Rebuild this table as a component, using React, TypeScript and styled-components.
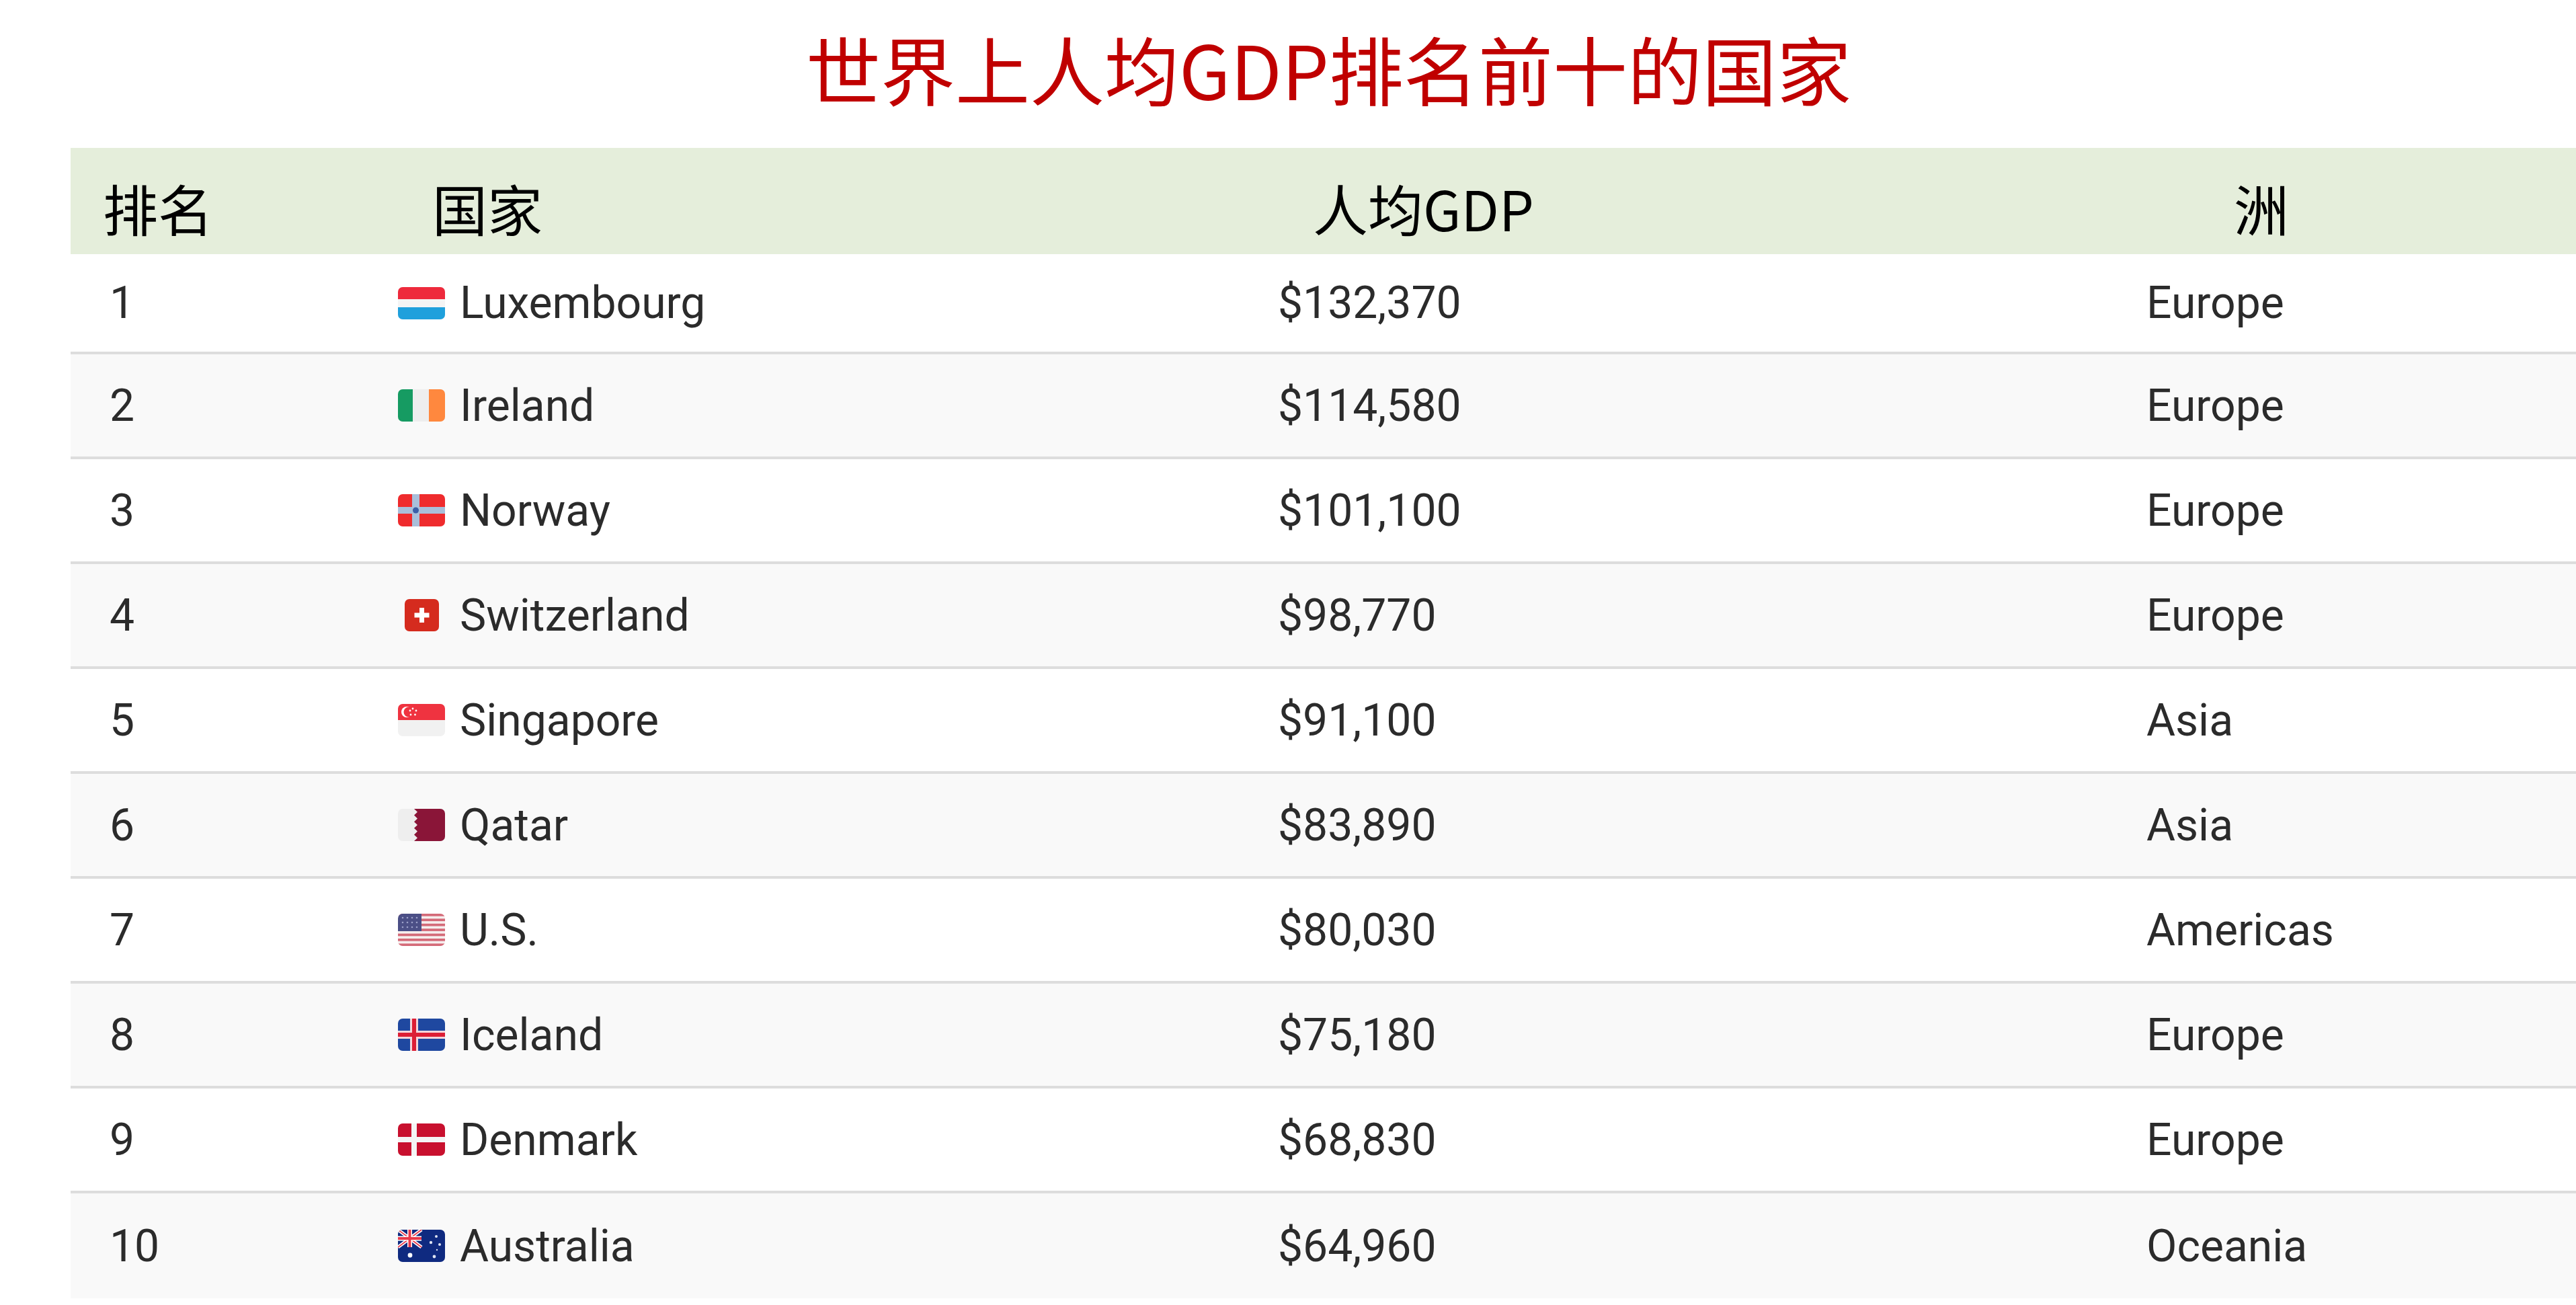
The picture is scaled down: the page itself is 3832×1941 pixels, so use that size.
import React from 'react';
import styled, { createGlobalStyle } from 'styled-components';

const GlobalStyle = createGlobalStyle`
  * {
    box-sizing: border-box;
  }
  body {
    margin: 0;
    background: #ffffff;
  }
`;

const Page = styled.div`
  padding-top: 45px;
`;

const Title = styled.h1`
  margin: 0 0 0 105px;
  padding: 0 0 64px 16px;
  text-align: center;
  font-family: "Noto Sans CJK SC", sans-serif;
  font-weight: 400;
  font-size: 111px;
  line-height: 1;
  color: #c00000;
`;

const Table = styled.div`
  margin-left: 105px;
`;

const HeaderRow = styled.div`
  display: grid;
  grid-template-columns: 490px 1310px 1370px 1fr;
  padding: 48px 0 28px 48px;
  background: #e5eedb;
  font-family: "Noto Sans CJK SC", sans-serif;
  font-size: 82px;
  line-height: 1;
  color: #000000;
`;

const HeaderCell = styled.div`
  white-space: nowrap;
`;

const Body = styled.div``;

const Row = styled.div<{ $alt: boolean }>`
  display: grid;
  grid-template-columns: 429px 1309px 1292px 1fr;
  align-items: center;
  height: 156px;
  padding-left: 58px;
  background: ${(p) => (p.$alt ? '#f9f9f9' : '#ffffff')};
  border-bottom: 4px solid #dddddd;
  font-family: Roboto, "Liberation Sans", sans-serif;
  font-size: 66px;
  color: #2b2b2b;

  &:first-child {
    height: 149px;
  }
  &:last-child {
    border-bottom: none;
  }
`;

const Cell = styled.div`
  white-space: nowrap;
`;

const CountryCell = styled.div`
  display: flex;
  align-items: center;
  gap: 22px;
  white-space: nowrap;
`;

const FlagSlot = styled.span`
  width: 70px;
  display: flex;
  justify-content: center;
`;

const FlagFrame = styled.svg`
  display: block;
  border-radius: 7px;
  overflow: hidden;
`;

const W = 70;
const H = 48;

const Flag = ({ w = W, children }: { w?: number; children: React.ReactNode }) => (
  <FlagSlot>
    <FlagFrame width={w} height={H} viewBox={`0 0 ${w} ${H}`}>
      {children}
    </FlagFrame>
  </FlagSlot>
);

const flags: Record<string, React.ReactNode> = {
  LU: (
    <Flag>
      <rect width={W} height={H} fill="#f4f4f4" />
      <rect width={W} height={18} fill="#ee2a3c" />
      <rect y={30} width={W} height={18} fill="#1fa0dc" />
    </Flag>
  ),
  IE: (
    <Flag>
      <rect width={W} height={H} fill="#eeeeee" />
      <rect width={22} height={H} fill="#169b62" />
      <rect x={46} width={24} height={H} fill="#ff883e" />
    </Flag>
  ),
  NO: (
    <Flag>
      <rect width={W} height={H} fill="#ef2b2d" />
      <rect x={21} width={11} height={H} fill="#a9bfda" />
      <rect y={19} width={W} height={10} fill="#a9bfda" />
      <circle cx={26.5} cy={24} r={4.5} fill="#3b5ea8" />
    </Flag>
  ),
  CH: (
    <Flag w={51}>
      <rect width={51} height={H} fill="#d52b1e" />
      <rect x={22} y={13} width={7} height={22} fill="#ffffff" />
      <rect x={14.5} y={20.5} width={22} height={7} fill="#ffffff" />
    </Flag>
  ),
  SG: (
    <Flag>
      <rect width={W} height={H} fill="#f1f1f1" />
      <rect width={W} height={24} fill="#ef3340" />
      <circle cx={13} cy={12} r={8} fill="#ffffff" />
      <circle cx={16} cy={12} r={7.5} fill="#ef3340" />
      <circle cx={22} cy={7} r={1.4} fill="#ffffff" />
      <circle cx={27} cy={10} r={1.4} fill="#ffffff" />
      <circle cx={25.5} cy={16} r={1.4} fill="#ffffff" />
      <circle cx={19} cy={16} r={1.4} fill="#ffffff" />
      <circle cx={18} cy={10} r={1.4} fill="#ffffff" />
    </Flag>
  ),
  QA: (
    <Flag>
      <rect width={W} height={H} fill="#eeeeee" />
      <polygon
        points="24,0 70,0 70,48 24,48 29,43.2 24,38.4 29,33.6 24,28.8 29,24 24,19.2 29,14.4 24,9.6 29,4.8"
        fill="#8a1538"
      />
    </Flag>
  ),
  US: (
    <Flag>
      <rect width={W} height={H} fill="#f6eeee" />
      {Array.from({ length: 7 }).map((_, i) => (
        <rect key={i} y={i * 7.4} width={W} height={3.7} fill="#d46a78" />
      ))}
      <rect width={35} height={26} fill="#4b4f86" />
      {[6, 13, 20, 27].map((x) =>
        [6, 13, 20].map((y) => (
          <circle key={`${x}-${y}`} cx={x + 1} cy={y} r={1.3} fill="#9ca0c8" />
        ))
      )}
    </Flag>
  ),
  IS: (
    <Flag>
      <rect width={W} height={H} fill="#1f48a0" />
      <rect x={18} width={12} height={H} fill="#f3d6da" />
      <rect y={18} width={W} height={12} fill="#f3d6da" />
      <rect x={21} width={6} height={H} fill="#dc1e35" />
      <rect y={21} width={W} height={6} fill="#dc1e35" />
    </Flag>
  ),
  DK: (
    <Flag>
      <rect width={W} height={H} fill="#c8102e" />
      <rect x={20} width={8} height={H} fill="#f4f4f4" />
      <rect y={20} width={W} height={8} fill="#f4f4f4" />
    </Flag>
  ),
  AU: (
    <Flag>
      <rect width={W} height={H} fill="#0f2a80" />
      <g>
        <rect width={35} height={26} fill="#0f2a80" />
        <line x1={0} y1={0} x2={35} y2={26} stroke="#ffffff" strokeWidth={5} />
        <line x1={35} y1={0} x2={0} y2={26} stroke="#ffffff" strokeWidth={5} />
        <line x1={0} y1={0} x2={35} y2={26} stroke="#e8384a" strokeWidth={1.8} />
        <line x1={35} y1={0} x2={0} y2={26} stroke="#e8384a" strokeWidth={1.8} />
        <rect x={14} width={7} height={26} fill="#ffffff" />
        <rect y={9.5} width={35} height={7} fill="#ffffff" />
        <rect x={15.5} width={4} height={26} fill="#e8384a" />
        <rect y={11} width={35} height={4} fill="#e8384a" />
      </g>
      <circle cx={18} cy={38} r={3.4} fill="#ffffff" />
      <circle cx={49} cy={19} r={2.2} fill="#dfe4f2" />
      <circle cx={57} cy={10} r={2} fill="#dfe4f2" />
      <circle cx={62} cy={22} r={2} fill="#dfe4f2" />
      <circle cx={54} cy={40} r={2.4} fill="#dfe4f2" />
      <circle cx={58} cy={30} r={1.2} fill="#dfe4f2" />
    </Flag>
  ),
};

type Country = {
  rank: number;
  name: string;
  code: string;
  gdp: string;
  continent: string;
};

const countries: Country[] = [
  { rank: 1, name: 'Luxembourg', code: 'LU', gdp: '$132,370', continent: 'Europe' },
  { rank: 2, name: 'Ireland', code: 'IE', gdp: '$114,580', continent: 'Europe' },
  { rank: 3, name: 'Norway', code: 'NO', gdp: '$101,100', continent: 'Europe' },
  { rank: 4, name: 'Switzerland', code: 'CH', gdp: '$98,770', continent: 'Europe' },
  { rank: 5, name: 'Singapore', code: 'SG', gdp: '$91,100', continent: 'Asia' },
  { rank: 6, name: 'Qatar', code: 'QA', gdp: '$83,890', continent: 'Asia' },
  { rank: 7, name: 'U.S.', code: 'US', gdp: '$80,030', continent: 'Americas' },
  { rank: 8, name: 'Iceland', code: 'IS', gdp: '$75,180', continent: 'Europe' },
  { rank: 9, name: 'Denmark', code: 'DK', gdp: '$68,830', continent: 'Europe' },
  { rank: 10, name: 'Australia', code: 'AU', gdp: '$64,960', continent: 'Oceania' },
];

const App = () => {
  return (
    <Page>
      <GlobalStyle />
      <Title>世界上人均GDP排名前十的国家</Title>
      <Table>
        <HeaderRow>
          <HeaderCell>排名</HeaderCell>
          <HeaderCell>国家</HeaderCell>
          <HeaderCell>人均GDP</HeaderCell>
          <HeaderCell>洲</HeaderCell>
        </HeaderRow>
        <Body>
          {countries.map((c) => (
            <Row key={c.rank} $alt={c.rank % 2 === 0}>
              <Cell>{c.rank}</Cell>
              <CountryCell>
                {flags[c.code]}
                {c.name}
              </CountryCell>
              <Cell>{c.gdp}</Cell>
              <Cell>{c.continent}</Cell>
            </Row>
          ))}
        </Body>
      </Table>
    </Page>
  );
};

export default App;
